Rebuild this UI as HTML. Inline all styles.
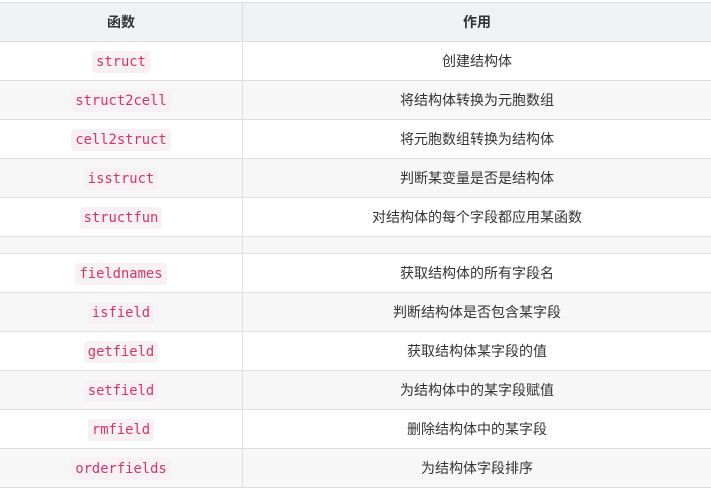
<!DOCTYPE html>
<html><head><meta charset="utf-8"><style>
body{margin:0;background:#fff;font-family:"Liberation Sans","Noto Sans CJK SC",sans-serif;}
table{position:absolute;left:-1px;top:2px;width:713px;border-collapse:collapse;font-size:14px;color:#333;}
td,th{border:1px solid #dfdfdf;text-align:center;padding:0;height:38px;}
th{background:#eff2f5;font-weight:bold;height:38px;font-size:14px;}
tr:nth-child(odd) td{background:#f7f7f7;}
tr.e td{height:16px;}
td:first-child,th:first-child{width:242px;}
code{font-family:"DejaVu Sans Mono","Liberation Mono",monospace;font-size:13.8px;color:#d6336c;background:#f8f1f3;padding:3px 4px;border-radius:3px;}
</style></head><body>
<table>
<tr><th>函数</th><th>作用</th></tr>
<tr><td><code>struct</code></td><td>创建结构体</td></tr>
<tr><td><code>struct2cell</code></td><td>将结构体转换为元胞数组</td></tr>
<tr><td><code>cell2struct</code></td><td>将元胞数组转换为结构体</td></tr>
<tr><td><code>isstruct</code></td><td>判断某变量是否是结构体</td></tr>
<tr><td><code>structfun</code></td><td>对结构体的每个字段都应用某函数</td></tr>
<tr class="e"><td></td><td></td></tr>
<tr><td><code>fieldnames</code></td><td>获取结构体的所有字段名</td></tr>
<tr><td><code>isfield</code></td><td>判断结构体是否包含某字段</td></tr>
<tr><td><code>getfield</code></td><td>获取结构体某字段的值</td></tr>
<tr><td><code>setfield</code></td><td>为结构体中的某字段赋值</td></tr>
<tr><td><code>rmfield</code></td><td>删除结构体中的某字段</td></tr>
<tr><td><code>orderfields</code></td><td>为结构体字段排序</td></tr>
</table>
</body></html>
